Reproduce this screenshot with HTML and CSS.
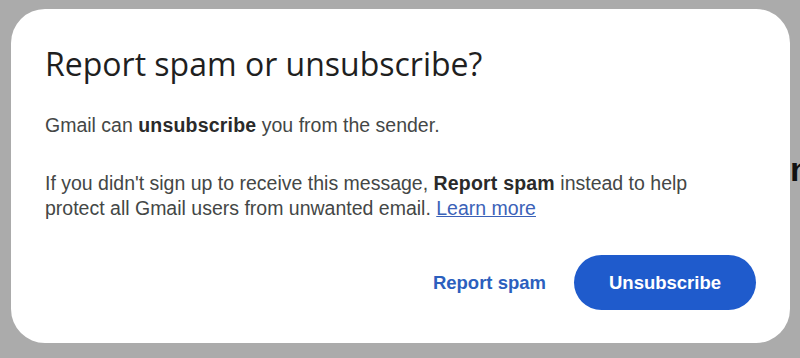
FILE: index.html
```html
<!DOCTYPE html>
<html>
<head>
<meta charset="utf-8">
<link rel="stylesheet" href="styles.css">
</head>
<body>
<div class="backdrop-glyph">n</div>
<div class="dialog">
  <h1 class="title">Report spam or unsubscribe?</h1>
  <p class="text">Gmail can <b>unsubscribe</b> you from the sender.</p>
  <p class="text">If you didn't sign up to receive this message, <b>Report spam</b> instead to help protect all Gmail users from unwanted email. <a class="link" href="#">Learn more</a></p>
  <div class="actions">
    <button class="btn-text">Report spam</button>
    <button class="btn-filled">Unsubscribe</button>
  </div>
</div>
</body>
</html>
```
FILE: styles.css
```css
html, body {
  margin: 0;
  padding: 0;
  background: #ababab;
  width: 800px;
  height: 358px;
  overflow: hidden;
  font-family: "Liberation Sans", Arial, sans-serif;
}
body {
  position: relative;
  padding: 9px 0 0 11px;
  box-sizing: border-box;
}
.backdrop-glyph {
  position: absolute;
  left: 790px;
  top: 150px;
  font-family: "Liberation Sans", Arial, sans-serif;
  font-size: 34px;
  font-weight: 700;
  color: #111;
}
.dialog {
  position: relative;
  width: 779px;
  height: 334px;
  background: #fff;
  border-radius: 34px;
  box-sizing: border-box;
  padding: 35px 34px 0 34px;
  display: flex;
  flex-direction: column;
}
.title {
  margin: 0;
  font-family: "Open Sans", Roboto, sans-serif;
  font-weight: 400;
  font-size: 32px;
  line-height: 40px;
  color: #1f1f1f;
}
.text {
  margin: 0;
  font-size: 19.5px;
  line-height: 25px;
  color: #444746;
  width: 665px;
}
.title + .text { margin-top: 29px; }
.text + .text { margin-top: 33px; }
.text b { font-weight: 700; color: #2a2a2a; letter-spacing: 0.2px; }
.link {
  color: #3b62b8;
  text-decoration: underline;
}
.actions {
  display: flex;
  justify-content: flex-end;
  align-items: center;
  gap: 28px;
  margin-top: 34px;
}
.btn-text, .btn-filled {
  font-family: "Liberation Sans", Arial, sans-serif;
  font-size: 18.5px;
  font-weight: 700;
  border: none;
  cursor: pointer;
}
.btn-text {
  background: transparent;
  color: #2c5fbe;
  padding: 0;
}
.btn-filled {
  background: #1f5bcc;
  color: #fff;
  height: 55px;
  width: 182px;
  border-radius: 28px;
}
```
